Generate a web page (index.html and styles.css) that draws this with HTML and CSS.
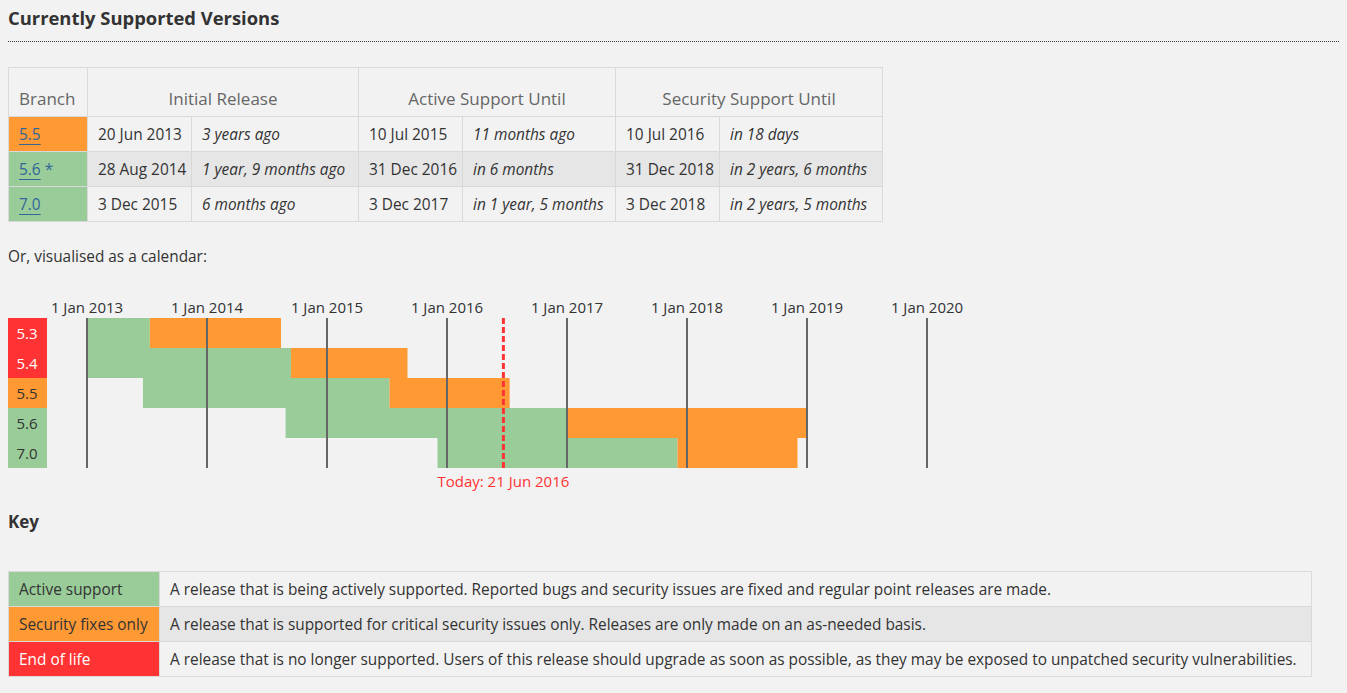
FILE: index.html
```html
<!DOCTYPE html>
<html lang="en">
<head>
<meta charset="utf-8">
<title>Supported Versions</title>
<link rel="stylesheet" href="styles.css">
</head>
<body>
<h2 class="section-title">Currently Supported Versions</h2>

<table class="versions">
  <colgroup>
    <col class="c-branch"><col class="c-date"><col class="c-rel1"><col class="c-date"><col class="c-rel2"><col class="c-date"><col class="c-rel3">
  </colgroup>
  <thead>
    <tr>
      <th>Branch</th>
      <th colspan="2">Initial Release</th>
      <th colspan="2">Active Support Until</th>
      <th colspan="2">Security Support Until</th>
    </tr>
  </thead>
  <tbody>
    <tr>
      <td class="branch security"><a href="#">5.5</a></td>
      <td>20 Jun 2013</td><td class="rel">3 years ago</td>
      <td>10 Jul 2015</td><td class="rel">11 months ago</td>
      <td>10 Jul 2016</td><td class="rel">in 18 days</td>
    </tr>
    <tr class="alt">
      <td class="branch stable"><a href="#">5.6</a> <span class="star">*</span></td>
      <td>28 Aug 2014</td><td class="rel">1 year, 9 months ago</td>
      <td>31 Dec 2016</td><td class="rel">in 6 months</td>
      <td>31 Dec 2018</td><td class="rel">in 2 years, 6 months</td>
    </tr>
    <tr>
      <td class="branch stable"><a href="#">7.0</a></td>
      <td>3 Dec 2015</td><td class="rel">6 months ago</td>
      <td>3 Dec 2017</td><td class="rel">in 1 year, 5 months</td>
      <td>3 Dec 2018</td><td class="rel">in 2 years, 5 months</td>
    </tr>
  </tbody>
</table>

<p class="intro">Or, visualised as a calendar:</p>

<svg class="calendar" width="1010" height="198" viewBox="0 0 1010 198" xmlns="http://www.w3.org/2000/svg">
  <g class="bars">
    <rect class="b-stable" x="80" y="24" width="62.8" height="30"/>
    <rect class="b-security" x="142.8" y="24" width="131.2" height="30"/>
    <rect class="b-stable" x="80" y="54" width="204" height="30"/>
    <rect class="b-security" x="284" y="54" width="116.5" height="30"/>
    <rect class="b-stable" x="136" y="84" width="246.5" height="30"/>
    <rect class="b-security" x="382.5" y="84" width="120.1" height="30"/>
    <rect class="b-stable" x="278.6" y="114" width="281.1" height="30"/>
    <rect class="b-security" x="559.7" y="114" width="240" height="30"/>
    <rect class="b-stable" x="430.5" y="144" width="240" height="30"/>
    <rect class="b-security" x="670.5" y="144" width="120" height="30"/>
  </g>
  <g class="branches">
    <rect class="b-eol" x="0" y="24" width="40" height="30"/>
    <text class="lbl light" x="20" y="45">5.3</text>
    <rect class="b-eol" x="0" y="54" width="40" height="30"/>
    <text class="lbl light" x="20" y="75">5.4</text>
    <rect class="b-security" x="0" y="84" width="40" height="30"/>
    <text class="lbl" x="20" y="105">5.5</text>
    <rect class="b-stable" x="0" y="114" width="40" height="30"/>
    <text class="lbl" x="20" y="135">5.6</text>
    <rect class="b-stable" x="0" y="144" width="40" height="30"/>
    <text class="lbl" x="20" y="165">7.0</text>
  </g>
  <g class="years">
    <line x1="80" y1="24" x2="80" y2="174"/><text x="80" y="19">1 Jan 2013</text>
    <line x1="200" y1="24" x2="200" y2="174"/><text x="200" y="19">1 Jan 2014</text>
    <line x1="320" y1="24" x2="320" y2="174"/><text x="320" y="19">1 Jan 2015</text>
    <line x1="440" y1="24" x2="440" y2="174"/><text x="440" y="19">1 Jan 2016</text>
    <line x1="560" y1="24" x2="560" y2="174"/><text x="560" y="19">1 Jan 2017</text>
    <line x1="680" y1="24" x2="680" y2="174"/><text x="680" y="19">1 Jan 2018</text>
    <line x1="800" y1="24" x2="800" y2="174"/><text x="800" y="19">1 Jan 2019</text>
    <line x1="920" y1="24" x2="920" y2="174"/><text x="920" y="19">1 Jan 2020</text>
  </g>
  <g class="today">
    <line x1="496.4" y1="24" x2="496.4" y2="174"/>
    <text x="496.4" y="193">Today: 21 Jun 2016</text>
  </g>
</svg>

<h3 class="key-title">Key</h3>

<table class="key">
  <colgroup><col class="k-label"><col class="k-desc"></colgroup>
  <tr>
    <td class="stable">Active support</td>
    <td>A release that is being actively supported. Reported bugs and security issues are fixed and regular point releases are made.</td>
  </tr>
  <tr class="alt">
    <td class="security">Security fixes only</td>
    <td>A release that is supported for critical security issues only. Releases are only made on an as-needed basis.</td>
  </tr>
  <tr>
    <td class="eol">End of life</td>
    <td>A release that is no longer supported. Users of this release should upgrade as soon as possible, as they may be exposed to unpatched security vulnerabilities.</td>
  </tr>
</table>
</body>
</html>
```

FILE: styles.css
```css
html { background: #f2f2f2; overflow-x: hidden; }
body {
  margin: 8px;
  background: #f2f2f2;
  color: #333;
  font-family: "Open Sans", "Noto Sans", "DejaVu Sans", sans-serif;
  font-size: 15.4px;
}

.section-title {
  margin: 0 -16px 0 0;
  font-size: 18.4px;
  line-height: 20px;
  font-weight: 700;
  color: #333;
  padding-bottom: 13px;
  border-bottom: 1px dotted #333;
}

.versions, .key {
  border-collapse: collapse;
  table-layout: fixed;
}
.versions { margin-top: 25px; width: 874px; }
.c-branch { width: 79px; }
.c-date { width: 104px; }
.c-rel1 { width: 167px; }
.c-rel2 { width: 153px; }
.c-rel3 { width: 163px; }

.versions th, .versions td, .key td {
  border: 1px solid #d9d9d9;
  padding: 0 10px;
  text-align: left;
  white-space: nowrap;
}
.versions th {
  height: 42px;
  vertical-align: bottom;
  padding-bottom: 6px;
  font-weight: 400;
  font-size: 17px;
  color: #666;
  text-align: center;
}
.versions th:first-child { text-align: left; }
.versions td, .key td { height: 34px; vertical-align: middle; }
.versions td.rel { font-style: italic; }
.alt td { background: #e6e6e6; }

.versions td.branch a {
  color: #369;
  text-decoration: underline;
  text-underline-offset: 4px;
}
.star { color: #369; }

.stable, .alt td.stable { background: #9c9; }
.security, .alt td.security { background: #f93; }
.eol, .alt td.eol { background: #f33; color: #fff; }

.intro {
  margin: 23px 0 0;
  line-height: 24px;
}

.calendar {
  display: block;
  margin: 25px 0 0 -1px;
  overflow: visible;
}
.calendar text {
  font-family: "Open Sans", "Noto Sans", sans-serif;
  font-size: 15px;
  text-anchor: middle;
  fill: #333;
}
.calendar .b-stable { fill: #9c9; }
.calendar .b-security { fill: #f93; }
.calendar .b-eol { fill: #f33; }
.calendar text.light { fill: #fff; }
.calendar .years line { stroke: #666; stroke-width: 2; }
.calendar .today line { stroke: #f33; stroke-width: 3; stroke-dasharray: 6 3; }
.calendar .today text { fill: #f33; }

.key-title {
  margin: 18px 0 0;
  font-size: 17px;
  line-height: 24px;
  font-weight: 700;
}
.key { margin-top: 37px; width: 1304px; }
.k-label { width: 151px; }
```
